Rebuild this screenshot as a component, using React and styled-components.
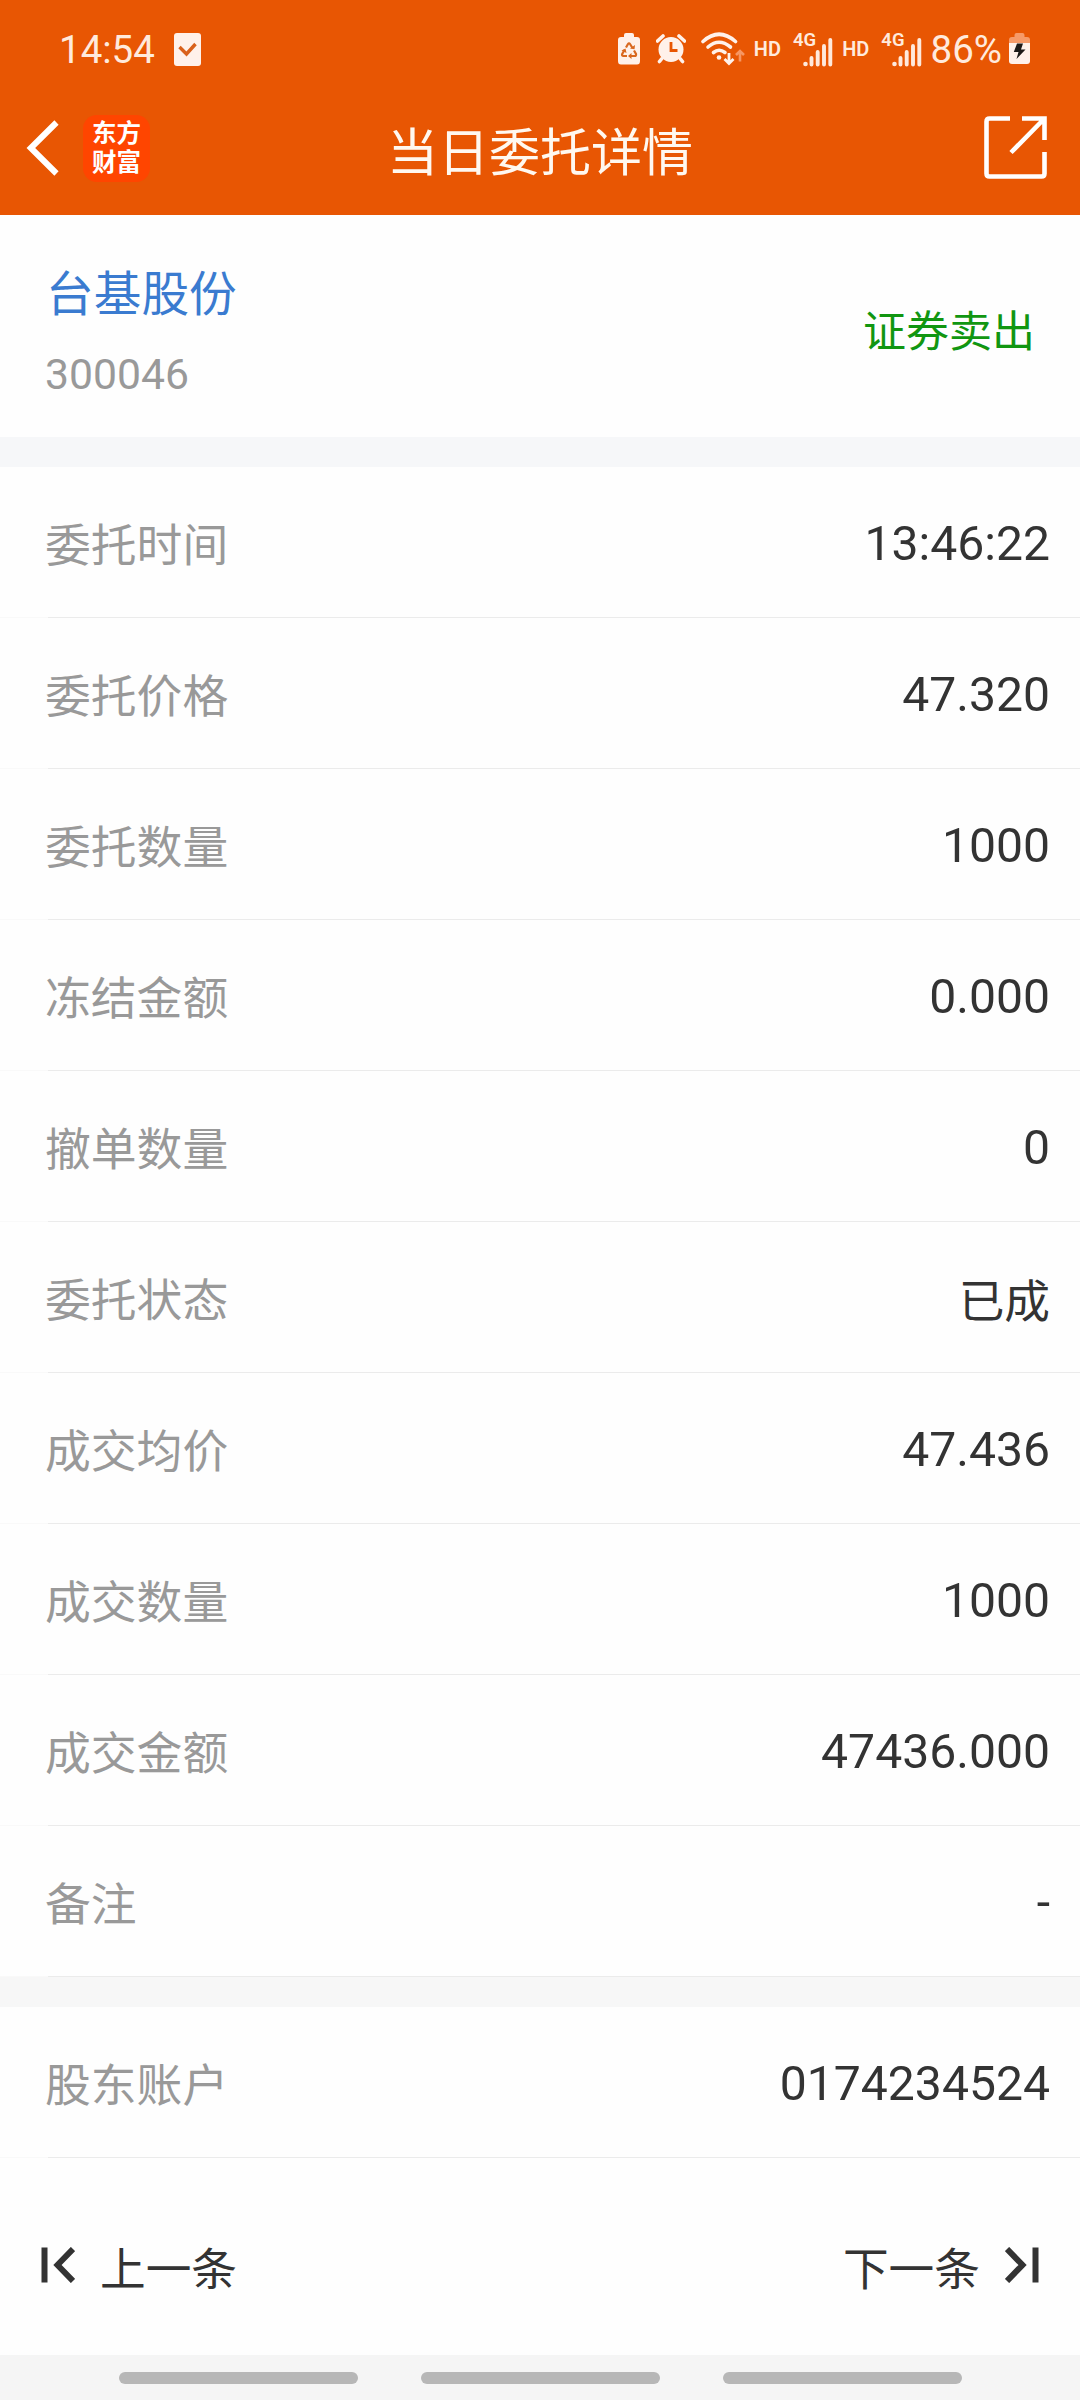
import React from "react"
import styled, { createGlobalStyle } from "styled-components"

const orderRows = [
  { label: "委托时间", value: "13:46:22" },
  { label: "委托价格", value: "47.320" },
  { label: "委托数量", value: "1000" },
  { label: "冻结金额", value: "0.000" },
  { label: "撤单数量", value: "0" },
  { label: "委托状态", value: "已成", cjk: true },
  { label: "成交均价", value: "47.436" },
  { label: "成交数量", value: "1000" },
  { label: "成交金额", value: "47436.000" },
  { label: "备注", value: "-" },
]

const accountRows = [{ label: "股东账户", value: "0174234524" }]

const NoteIcon = () => (
  <svg width="27" height="33" viewBox="0 0 27 33">
    <rect width="27" height="33" rx="3" fill="#fff1ea" />
    <path d="M5.5 14l7 7L21.5 11" fill="none" stroke="#d9601a" strokeWidth="3.4" />
  </svg>
)

const RecycleBatteryIcon = () => (
  <svg width="22" height="32" viewBox="0 0 22 32">
    <path d="M6 4V2q0-2 2-2h6q2 0 2 2v2h3q3 0 3 3v21q0 3.5-3 3.5H3q-3 0-3-3.500V7q0-3 3-3z" fill="#fff1ea" />
    <g fill="none" stroke="#d9681f" strokeWidth="2.2">
      <path d="M8 14.500l2-3.500q1-1.500 2 0l2.500 4" />
      <path d="M16 17.500l2 3.500q.5 2-1.500 2h-4" />
      <path d="M9 23H5.500q-2-.2-1.300-2l2.300-4" />
    </g>
    <path d="M12 15.500l4.500.8.500-4.300zM13.500 20v6l-3.500-3zM3.500 17.500l4-2 1 4.500z" fill="#d9681f" />
  </svg>
)

const AlarmIcon = () => (
  <svg width="30" height="30" viewBox="0 0 30 30">
    <circle cx="15" cy="15.500" r="12.500" fill="#fff1ea" />
    <path d="M1.500 7L7 2M28.500 7L23 2M5.500 25l-2 2.500M24.500 25l2 2.500" stroke="#fff1ea" strokeWidth="3.600" strokeLinecap="round" />
    <path d="M15 8v8.500h6.500" fill="none" stroke="#e85603" strokeWidth="2.800" />
  </svg>
)

const WifiIcon = () => (
  <svg width="44" height="34" viewBox="0 0 44 34">
    <g fill="none" stroke="#fff1ea" strokeWidth="3.600" strokeLinecap="round">
      <path d="M2 9.500Q18-5 34.500 9.500" />
      <path d="M7 15q11-9.500 22.500 0" />
      <path d="M12.500 20.500q5.500-4.500 11.500 0" />
    </g>
    <circle cx="18" cy="25.500" r="2.300" fill="#fff1ea" />
    <path d="M28 21v10M23.500 27l4.500 4.500 4.500-4.500" fill="none" stroke="#fff1ea" strokeWidth="2.800" />
    <path d="M39 29.500V19M35 23l4-4 4 4" fill="none" stroke="#f69663" strokeWidth="2.600" />
  </svg>
)

const SignalBars = () => (
  <svg width="30" height="29" viewBox="0 0 30 29">
    <circle cx="2.500" cy="26" r="2.300" fill="#ffe9dc" />
    <path d="M8.500 20v6.500M14.700 14v12.500M21 8v18.500M27.300 2v24.500" stroke="#ffe9dc" strokeWidth="3.900" strokeLinecap="round" />
  </svg>
)

const ChargingIcon = () => (
  <svg width="21" height="32" viewBox="0 0 21 32">
    <path d="M5.500 4V2q0-2 2-2h6q2 0 2 2v2h2.500q3 0 3 3v4H0V7q0-3 3-3z" fill="#f69a68" />
    <path d="M0 10h21v18q0 3-3 3H3q-3 0-3-3z" fill="#fff1ea" />
    <path d="M8 10.500h6l-2 6h4.500L7.500 26l2-7H4.800z" fill="#1d1a18" />
  </svg>
)

const BackIcon = () => (
  <svg width="34" height="56" viewBox="0 0 34 56">
    <path d="M30.500 2.500L4.800 28l25.700 25.500" fill="none" stroke="#fff" strokeWidth="6" />
  </svg>
)

const ShareIcon = () => (
  <svg width="64" height="64" viewBox="0 0 64 64">
    <g fill="none" stroke="#fff" strokeWidth="4.600">
      <path d="M26 2.500H5.500q-3 0-3 3v52q0 3 3 3h52q3 0 3-3V36" />
      <path d="M38 2.500h22.500V24M60 3L27 36.500" />
    </g>
  </svg>
)

const FirstIcon = () => (
  <svg width="34" height="36" viewBox="0 0 34 36">
    <path d="M3.500 .500v35M32 2L16.500 18 32 34" fill="none" stroke="#333" strokeWidth="6" />
  </svg>
)

const LastIcon = () => (
  <svg width="34" height="36" viewBox="0 0 34 36">
    <path d="M30.500 .500v35M2 2l15.500 16L2 34" fill="none" stroke="#333" strokeWidth="6" />
  </svg>
)

const DetailRows = ({ rows }) => (
  <section>
    {rows.map((row) => (
      <Row key={row.label}>
        <RowLabel>{row.label}</RowLabel>
        <RowValue $cjk={row.cjk}>{row.value}</RowValue>
      </Row>
    ))}
  </section>
)

const MobileSignal = () => (
  <Signal>
    <NetworkType>4G</NetworkType>
    <SignalBars />
  </Signal>
)

const App = () => {
  return (
    <>
      <GlobalStyle />
      <Page>
        <Header>
          <StatusBar>
            <StatusGroup>
              <StatusText>14:54</StatusText>
              <StatusItem $left={19}><NoteIcon /></StatusItem>
            </StatusGroup>
            <StatusGroup>
              <RecycleBatteryIcon />
              <StatusItem $left={16}><AlarmIcon /></StatusItem>
              <StatusItem $left={15}><WifiIcon /></StatusItem>
              <StatusItem $left={9}><HdText>HD</HdText></StatusItem>
              <StatusItem $left={12}><MobileSignal /></StatusItem>
              <StatusItem $left={9}><HdText>HD</HdText></StatusItem>
              <StatusItem $left={12}><MobileSignal /></StatusItem>
              <StatusItem $left={9}><StatusText>86%</StatusText></StatusItem>
              <StatusItem $left={7}><ChargingIcon /></StatusItem>
            </StatusGroup>
          </StatusBar>
          <TitleBar>
            <TitleLeft>
              <BackIcon />
              <Logo>
                <span>东方</span>
                <span>财富</span>
              </Logo>
            </TitleLeft>
            <Title>当日委托详情</Title>
            <TitleRight>
              <ShareIcon />
            </TitleRight>
          </TitleBar>
        </Header>
        <Stock>
          <div>
            <StockName>台基股份</StockName>
            <StockCode>300046</StockCode>
          </div>
          <Direction>证券卖出</Direction>
        </Stock>
        <Divider $color="#f6f7f9" />
        <DetailRows rows={orderRows} />
        <Divider $color="#f7f7f7" />
        <DetailRows rows={accountRows} />
        <Pager>
          <PagerButton>
            <FirstIcon />
            <span>上一条</span>
          </PagerButton>
          <PagerButton>
            <span>下一条</span>
            <LastIcon />
          </PagerButton>
        </Pager>
        <GestureBar>
          <GestureHint />
          <GestureHint />
          <GestureHint />
        </GestureBar>
      </Page>
    </>
  )
}

export default App

const GlobalStyle = createGlobalStyle`
  body {
    margin: 0;
    background: #fefefe;
    font-family: Roboto, "Noto Sans CJK SC", sans-serif;
  }
  svg {
    display: block;
    flex: none;
  }
`

const Page = styled.div`
  display: flex;
  flex-direction: column;
  width: 1080px;
  height: 2400px;
  overflow: hidden;
  background: #fefefe;
`

const Header = styled.header`
  height: 215px;
  background: #e85603;
  color: #fff;
`

const StatusBar = styled.div`
  display: flex;
  justify-content: space-between;
  box-sizing: border-box;
  height: 98px;
  padding: 0 50px 0 59px;
`

const StatusGroup = styled.div`
  display: flex;
  align-items: center;
`

const StatusItem = styled.div`
  margin-left: ${(props) => props.$left}px;
`

const StatusText = styled.span`
  display: block;
  padding-top: 1px;
  font-size: 38.5px;
  line-height: 46px;
  color: #ffeadd;
`

const HdText = styled.span`
  display: block;
  font-size: 20px;
  font-weight: 600;
  line-height: 24px;
  color: #ffeadd;
`

const Signal = styled.div`
  display: flex;
  align-items: flex-start;
  height: 33px;
  svg {
    margin: 5px 0 0 -13px;
  }
`

const NetworkType = styled.span`
  font-size: 18.5px;
  font-weight: 600;
  line-height: 14px;
  color: #ffeadd;
`

const TitleBar = styled.div`
  display: grid;
  grid-template-columns: 1fr auto 1fr;
  align-items: center;
  height: 100px;
  padding: 0 32px 0 26px;
`

const TitleLeft = styled.div`
  display: flex;
  align-items: center;
  gap: 23px;
`

const TitleRight = styled.div`
  display: flex;
  justify-content: flex-end;
`

const Title = styled.h1`
  margin: 0 0 0 6px;
  padding-top: 11px;
  font-size: 51px;
  font-weight: 400;
  line-height: 76px;
  color: #fff8f0;
`

const Logo = styled.div`
  display: flex;
  flex-direction: column;
  align-items: center;
  justify-content: center;
  width: 67px;
  height: 67px;
  border-radius: 14px;
  background: #ff4500;
  font-size: 24.5px;
  font-weight: 700;
  line-height: 29px;
`

const Stock = styled.section`
  display: flex;
  justify-content: space-between;
  box-sizing: border-box;
  height: 222px;
  padding: 45px 45px 0 45px;
`

const StockName = styled.div`
  padding-left: 1px;
  font-size: 47.7px;
  line-height: 70px;
  color: #3a7bd0;
`

const StockCode = styled.div`
  margin-top: 19px;
  font-size: 42.7px;
  line-height: 50px;
  color: #999;
`

const Direction = styled.div`
  margin-top: 41px;
  font-size: 43px;
  line-height: 62px;
  color: #119611;
`

const Divider = styled.div`
  height: 30px;
  background: ${(props) => props.$color};
`

const Row = styled.div`
  display: flex;
  align-items: center;
  justify-content: space-between;
  box-sizing: border-box;
  height: 151px;
  padding: 0 30px 0 45px;
  background: linear-gradient(to right, #f9f9f9 48px, #ebebeb 48px) bottom / 100% 1px no-repeat;
`

const RowLabel = styled.span`
  padding-top: 8px;
  font-size: 45.8px;
  line-height: 66px;
  color: #999;
`

const RowValue = styled.span`
  padding-top: ${(props) => (props.$cjk ? 10 : 2)}px;
  font-size: ${(props) => (props.$cjk ? 45.7 : 48.1)}px;
  line-height: 66px;
  color: #333;
`

const Pager = styled.nav`
  display: flex;
  align-items: center;
  justify-content: space-between;
  box-sizing: border-box;
  height: 197px;
  padding: 29px 41px 0;
`

const PagerButton = styled.div`
  display: flex;
  align-items: center;
  gap: 25px;
  font-size: 45.7px;
  line-height: 66px;
  color: #333;
  svg {
    margin-bottom: 13px;
  }
`

const GestureBar = styled.div`
  display: flex;
  align-items: center;
  justify-content: center;
  gap: 63px;
  height: 45px;
  background: #f5f5f5;
`

const GestureHint = styled.i`
  width: 239px;
  height: 12px;
  border-radius: 6px;
  background: #b7b7b7;
`
